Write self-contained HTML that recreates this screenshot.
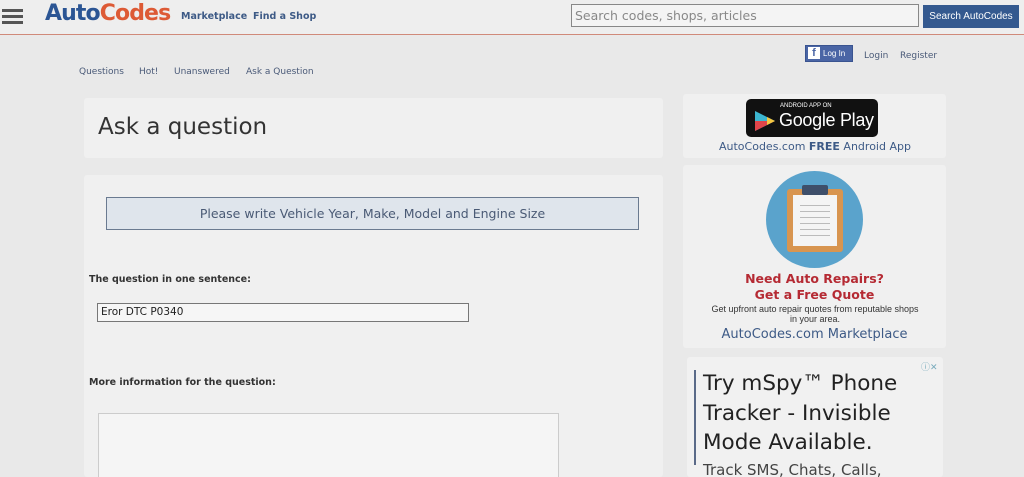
<!DOCTYPE html><html style="overflow:hidden"><head><style>
body{margin:0;width:1024px;height:477px;overflow:hidden;background:#e9e9e9;font-family:"Liberation Sans",sans-serif;position:relative}
.a{position:absolute;white-space:nowrap}
.p{position:absolute;background:#f0f0f0;border-radius:3px}
.lnk{color:#4a5a78;font-size:10px;font-family:"DejaVu Sans",sans-serif;font-size:9px}
.dv{font-family:"DejaVu Sans",sans-serif}
</style></head><body>
<div class="a" style="left:0;top:0;width:1024px;height:34px;background:#eeeeee;border-bottom:1px solid #d08a7a"></div>
<div class="a" style="left:2px;top:9px;width:21px;height:3px;background:#555;box-shadow:0 6px 0 #555,0 12px 0 #555"></div>
<div class="a" style="left:45px;top:1px;font-size:22px;font-weight:bold;letter-spacing:-0.9px;font-family:'DejaVu Sans',sans-serif"><span style="color:#2b5594">Auto</span><span style="color:#dd5a35">Codes</span></div>
<div class="a dv" style="left:181px;top:11px;font-size:9.5px;font-weight:bold;color:#3d5a86">Marketplace</div>
<div class="a dv" style="left:253px;top:11px;font-size:9.5px;font-weight:bold;color:#3d5a86">Find a Shop</div>
<div class="a dv" style="left:571px;top:4px;border:1px solid #888;background:#f4f4f4;font-size:12.5px;color:#888;line-height:21px;padding-left:3px;box-sizing:border-box;width:348px;height:23px">Search codes, shops, articles</div>
<div class="a" style="left:923px;top:5px;width:96px;height:23px;background:#34598f;color:#fff;font-size:10px;line-height:23px;text-align:center">Search AutoCodes</div>
<div class="a lnk" style="left:79px;top:67px">Questions</div>
<div class="a lnk" style="left:139px;top:67px">Hot!</div>
<div class="a lnk" style="left:174px;top:67px">Unanswered</div>
<div class="a lnk" style="left:246px;top:67px">Ask a Question</div>
<div class="a" style="left:805px;top:45px;width:48px;height:17px;background:#4a65a5;border:1px solid #3a5490;box-sizing:border-box;color:#fff;font-size:8px;line-height:15px"><span style="display:inline-block;width:12px;height:12px;background:#fff;color:#4a65a5;font-weight:bold;text-align:center;line-height:13px;margin:1px 3px 0 2px;vertical-align:top;font-size:11px">f</span>Log In</div>
<div class="a lnk" style="left:864px;top:51px">Login</div>
<div class="a lnk" style="left:900px;top:51px">Register</div>
<div class="p" style="left:84px;top:98px;width:579px;height:60px"></div>
<div class="a dv" style="left:98px;top:114px;font-size:23px;color:#333">Ask a question</div>
<div class="p" style="left:84px;top:175px;width:579px;height:302px"></div>
<div class="a dv" style="left:106px;top:197px;width:533px;height:33px;border:1px solid #6a7a90;background:#dfe5ec;box-sizing:border-box;text-align:center;line-height:31px;font-size:12.5px;color:#4a5a75">Please write Vehicle Year, Make, Model and Engine Size</div>
<div class="a dv" style="left:89px;top:274px;font-size:9.5px;font-weight:bold;color:#333">The question in one sentence:</div>
<div class="a dv" style="left:97px;top:303px;width:372px;height:19px;border:1px solid #777;background:#f6f6f6;box-sizing:border-box;font-size:10.5px;line-height:17px;padding-left:3px;color:#222">Eror DTC P0340</div>
<div class="a dv" style="left:89px;top:377px;font-size:9.5px;font-weight:bold;color:#333">More information for the question:</div>
<div class="a" style="left:98px;top:413px;width:459px;height:64px;border:1px solid #ccc;border-bottom:none;background:#f5f5f5"></div>
<div class="p" style="left:683px;top:94px;width:263px;height:64px"></div>
<div class="a" style="left:746px;top:99px;width:132px;height:38px;background:#111;border-radius:5px;color:#fff">
<div class="a" style="left:34px;top:4px;font-size:6px">ANDROID APP ON</div>
<div class="a" style="left:33px;top:11px;font-size:18px;letter-spacing:-0.3px">Google Play</div>
<svg class="a" style="left:9px;top:12px" width="20" height="20"><polygon points="0,0 20,10 0,20" fill="#3cb6d0"/><polygon points="0,10 20,10 0,20" fill="#e0454a"/><polygon points="12,6 20,10 12,14" fill="#f5c842"/></svg></div>
<div class="a dv" style="left:719px;top:140px;font-size:11px;color:#3d5a86">AutoCodes.com <b>FREE</b> Android App</div>
<div class="p" style="left:683px;top:165px;width:263px;height:183px"></div>
<div class="a" style="left:766px;top:171px;width:97px;height:97px;border-radius:50%;background:#5aa3cc"></div>
<div class="a" style="left:787px;top:189px;width:56px;height:63px;background:#d89550;border-radius:3px"></div>
<div class="a" style="left:793px;top:195px;width:44px;height:51px;background:#f4f4f4"></div>
<div class="a" style="left:802px;top:185px;width:26px;height:10px;background:#3e4f6a;border-radius:2px"></div>
<div class="a" style="left:800px;top:205px;width:30px;height:1px;background:#bbb;box-shadow:0 6px 0 #bbb,0 12px 0 #bbb,0 18px 0 #bbb,0 24px 0 #bbb,0 30px 0 #bbb"></div>
<div class="a dv" style="left:683px;top:271px;width:263px;text-align:center;color:#b52a33;font-weight:bold;font-size:12.5px;line-height:16px">Need Auto Repairs?<br>Get a Free Quote</div>
<div class="a" style="left:690px;top:304px;width:250px;text-align:center;color:#333;font-size:9px;line-height:10px">Get upfront auto repair quotes from reputable shops<br>in your area.</div>
<div class="a dv" style="left:683px;top:327px;width:263px;text-align:center;color:#3d5a86;font-size:13px">AutoCodes.com Marketplace</div>
<div class="p" style="left:687px;top:357px;width:256px;height:120px;background:#f1f1f1"></div>
<div class="a" style="left:921px;top:360px;font-size:9px;color:#7ab">ⓘ✕</div>
<div class="a" style="left:694px;top:370px;width:2px;height:95px;background:#5a6a88"></div>
<div class="a dv" style="left:703px;top:369px;font-size:21.5px;line-height:29.5px;color:#222">Try mSpy™ Phone<br>Tracker - Invisible<br>Mode Available.</div>
<div class="a dv" style="left:703px;top:461px;font-size:15px;color:#444">Track SMS, Chats, Calls,</div>
</body></html>
